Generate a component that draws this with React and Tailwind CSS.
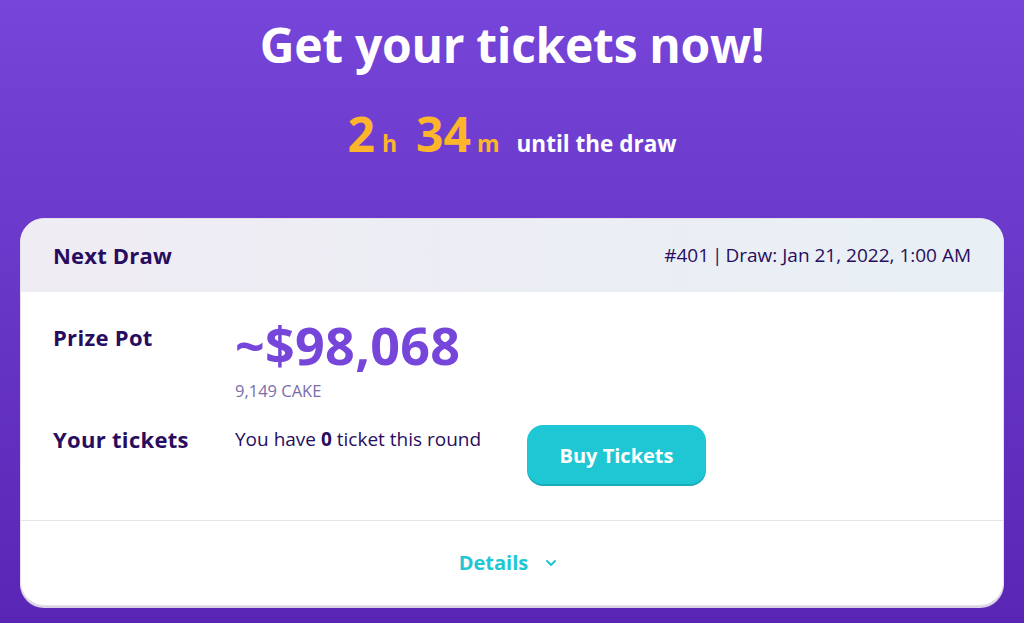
import React from 'react';

const font = { fontFamily: '"Open Sans", "Noto Sans", sans-serif' };

function Countdown() {
  return (
    <div className="flex items-baseline justify-center mt-[34px]">
      <span className="text-[48px] font-bold leading-[48px] text-[#fdb52b]">2</span>
      <span className="text-[23px] font-bold leading-none text-[#fdb52b] ml-[7px] mr-[19px]">h</span>
      <span className="text-[48px] font-bold leading-[48px] text-[#fdb52b]">34</span>
      <span className="text-[23px] font-bold leading-none text-[#fdb52b] ml-[6px] mr-[17px]">m</span>
      <span className="text-[22.5px] font-bold leading-none text-white">until the draw</span>
    </div>
  );
}

function Row({ label, children, className = '' }) {
  return (
    <div className={`flex ${className}`}>
      <div className="w-[182px] shrink-0 text-[22px] font-bold text-[#280d5f] leading-[28px] tracking-[0.3px]">{label}</div>
      <div className="flex-1">{children}</div>
    </div>
  );
}

export default function App() {
  return (
    <div
      style={font}
      className="h-[623px] overflow-hidden bg-gradient-to-b from-[#7645d9] to-[#5925b4] flex flex-col items-center"
    >
      <h1 className="pt-[14px] text-[48px] font-bold text-white leading-[62px] tracking-[-0.3px]">
        Get your tickets now!
      </h1>
      <Countdown />

      <div className="mt-[60px] w-[984px] rounded-[24px] bg-white border border-[#e4dfea] shadow-[0_2px_0_#d8d2e4] overflow-hidden">
        <div className="h-[73px] px-[32px] flex items-center justify-between bg-gradient-to-r from-[#f0ecf4] to-[#e8f0f5]">
          <span className="text-[22px] font-bold text-[#280d5f] tracking-[0.2px]">Next Draw</span>
          <span className="text-[19px] text-[#280d5f]">
            #401<span className="mx-[3px]">|</span>Draw: Jan 21, 2022, 1:00 AM
          </span>
        </div>

        <div className="px-[32px] pt-[31px] pb-[34px] border-b border-[#e7e3eb]">
          <Row label="Prize Pot">
            <div className="text-[52px] font-bold text-[#7645d9] leading-[56px] -mt-[6px] tracking-[0.3px]">~$98,068</div>
            <div className="text-[16.5px] text-[#7a6eaa] leading-[16px] mt-[10px]">9,149 CAKE</div>
          </Row>
          <Row label="Your tickets" className="mt-[26px]">
            <div className="flex items-start">
              <span className="w-[292px] text-[19px] text-[#280d5f] leading-[28px]">
                You have <b>0</b> ticket this round
              </span>
              <button className="w-[179px] h-[61px] rounded-[16px] bg-[#1fc7d4] shadow-[inset_0_-2px_0_rgba(14,14,44,0.15)] text-white text-[20px] font-bold">
                Buy Tickets
              </button>
            </div>
          </Row>
        </div>

        <div className="h-[84px] flex items-center justify-center">
          <span className="text-[20px] font-bold text-[#1fc7d4] ml-[-6px]">Details</span>
          <svg className="ml-[15px]" width="16" height="16" viewBox="0 0 24 24" fill="none" stroke="#1fc7d4" strokeWidth="3" strokeLinecap="round" strokeLinejoin="round">
            <path d="M6 9l6 6 6-6" />
          </svg>
        </div>
      </div>
    </div>
  );
}
